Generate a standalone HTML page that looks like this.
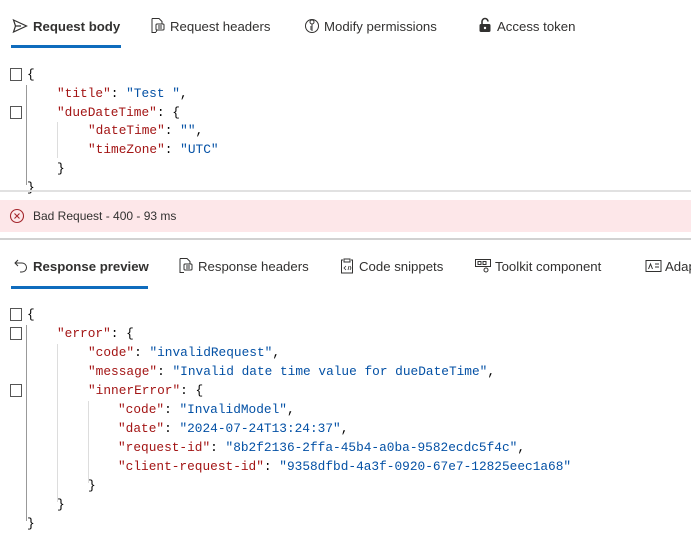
<!DOCTYPE html>
<html><head><meta charset="utf-8"><style>
html,body{margin:0;width:691px;height:546px;overflow:hidden}
body{background:#fff;font-family:"Liberation Sans",sans-serif;color:#323130;position:relative}
.a{position:absolute;white-space:nowrap}
.t{font-size:13.2px;line-height:16px}
.b{font-weight:bold}
.c{font-family:"Liberation Mono",monospace;font-size:12.8px;line-height:19px;color:#000}
.k{color:#a31515}.s{color:#0451a5}
.cb{position:absolute;width:10px;height:11px;border:1px solid #555;background:#fff}
.g{position:absolute;width:1px;background:#999}
.g2{position:absolute;width:1px;background:#ddd}
svg{position:absolute}
</style></head><body>
<svg style="left:12px;top:18px" width="16" height="16" viewBox="0 0 16 16"><path d="M1.5 2 L14.5 8 L1.5 14 L3.5 8 Z M3.5 8 H9" fill="none" stroke="#323130" stroke-width="1.2"/></svg>
<div class="a t b" style="left:33px;top:19px">Request body</div>
<div class="a" style="left:11px;top:45px;width:110px;height:3px;background:#0f6cbd"></div>
<svg style="left:150px;top:17px" width="16" height="17" viewBox="0 0 16 17"><path d="M2 1.5h7l3 3v3M2 1.5v14h4" fill="none" stroke="#323130"/><rect x="6" y="7" width="8" height="6" rx="1" fill="none" stroke="#323130"/><path d="M8 9h4M8 11h4M7 13l-1 2" stroke="#323130" fill="none"/></svg>
<div class="a t" style="left:170px;top:19px">Request headers</div>
<svg style="left:304px;top:17px" width="16" height="17" viewBox="0 0 16 17"><circle cx="8" cy="9" r="6.5" fill="none" stroke="#323130"/><circle cx="8" cy="5" r="2" fill="none" stroke="#323130"/><path d="M8 7v7M8 10h-2M8 12h-2" stroke="#323130" fill="none"/></svg>
<div class="a t" style="left:324px;top:19px">Modify permissions</div>
<svg style="left:478px;top:17px" width="14" height="17" viewBox="0 0 14 17"><path d="M4 7V4.5a3 3 0 0 1 6 0" fill="none" stroke="#323130" stroke-width="1.6"/><rect x="1.5" y="7" width="11" height="8" rx="1.5" fill="#323130"/><circle cx="7" cy="11" r="1.2" fill="#fff"/></svg>
<div class="a t" style="left:497px;top:19px">Access token</div>
<div class="cb" style="left:10px;top:68px"></div>
<div class="cb" style="left:10px;top:106px"></div>
<div class="g" style="left:26px;top:85px;height:100px"></div>
<div class="g2" style="left:57px;top:122px;height:36px"></div>
<div class="a c" style="left:27px;top:65px">{</div>
<div class="a c" style="left:57px;top:84px"><span class="k">"title"</span>: <span class="s">"Test "</span>,</div>
<div class="a c" style="left:57px;top:103px"><span class="k">"dueDateTime"</span>: {</div>
<div class="a c" style="left:88px;top:121px"><span class="k">"dateTime"</span>: <span class="s">""</span>,</div>
<div class="a c" style="left:88px;top:140px"><span class="k">"timeZone"</span>: <span class="s">"UTC"</span></div>
<div class="a c" style="left:57px;top:159px">}</div>
<div class="a c" style="left:27px;top:178px">}</div>
<div class="a" style="left:0;top:190px;width:691px;height:2px;background:#e1e1e1"></div>
<div class="a" style="left:0;top:200px;width:691px;height:32px;background:#fde7e9"></div>
<svg style="left:9px;top:208px" width="16" height="16" viewBox="0 0 16 16"><circle cx="8" cy="8" r="6.5" fill="none" stroke="#a4262c" stroke-width="1.1"/><path d="M5.5 5.5l5 5M10.5 5.5l-5 5" stroke="#a4262c" stroke-width="1.1"/></svg>
<div class="a" style="left:33px;top:209px;font-size:12px;color:#323130">Bad Request - 400 - 93 ms</div>
<div class="a" style="left:0;top:238px;width:691px;height:2px;background:#d1d1d1"></div>
<svg style="left:13px;top:258px" width="16" height="16" viewBox="0 0 16 16"><path d="M5 2L2 5l3 3M2 5h7a4.5 4.5 0 0 1 0 9H7" fill="none" stroke="#323130"/></svg>
<div class="a t b" style="left:33px;top:259px">Response preview</div>
<div class="a" style="left:11px;top:286px;width:137px;height:3px;background:#0f6cbd"></div>
<svg style="left:178px;top:257px" width="16" height="17" viewBox="0 0 16 17"><path d="M2 1.5h7l3 3v3M2 1.5v14h4" fill="none" stroke="#323130"/><rect x="6" y="7" width="8" height="6" rx="1" fill="none" stroke="#323130"/><path d="M8 9h4M8 11h4" stroke="#323130"/></svg>
<div class="a t" style="left:198px;top:259px">Response headers</div>
<svg style="left:339px;top:257px" width="16" height="17" viewBox="0 0 16 17"><path d="M4 3H2.5v13h11V3H12M5 2h6v3H5z" fill="none" stroke="#323130"/><path d="M7 9l-2 2 2 2M9 13l1-4M11 9l1 2-1 2" fill="none" stroke="#323130" stroke-width=".8"/></svg>
<div class="a t" style="left:359px;top:259px">Code snippets</div>
<svg style="left:474px;top:258px" width="18" height="16" viewBox="0 0 18 16"><rect x="1.5" y="1.5" width="15" height="7" fill="none" stroke="#323130"/><rect x="4" y="3.5" width="3" height="3" fill="none" stroke="#323130"/><rect x="9" y="3.5" width="3" height="3" fill="none" stroke="#323130"/><circle cx="12" cy="12" r="2" fill="none" stroke="#323130"/></svg>
<div class="a t" style="left:495px;top:259px">Toolkit component</div>
<svg style="left:645px;top:259px" width="17" height="14" viewBox="0 0 17 14"><rect x="1" y="1.5" width="15" height="11" fill="none" stroke="#323130"/><path d="M3.5 10l2-5 2 5M10 5h4M10 8h4" fill="none" stroke="#323130"/></svg>
<div class="a t" style="left:665px;top:259px;width:26px;overflow:hidden">Adaptive</div>
<div class="cb" style="left:10px;top:308px"></div>
<div class="cb" style="left:10px;top:327px"></div>
<div class="cb" style="left:10px;top:384px"></div>
<div class="g" style="left:26px;top:325px;height:196px"></div>
<div class="g2" style="left:57px;top:344px;height:158px"></div>
<div class="g2" style="left:88px;top:401px;height:82px"></div>
<div class="a c" style="left:27px;top:305px">{</div>
<div class="a c" style="left:57px;top:324px"><span class="k">"error"</span>: {</div>
<div class="a c" style="left:88px;top:343px"><span class="k">"code"</span>: <span class="s">"invalidRequest"</span>,</div>
<div class="a c" style="left:88px;top:362px"><span class="k">"message"</span>: <span class="s">"Invalid date time value for dueDateTime"</span>,</div>
<div class="a c" style="left:88px;top:381px"><span class="k">"innerError"</span>: {</div>
<div class="a c" style="left:118px;top:400px"><span class="k">"code"</span>: <span class="s">"InvalidModel"</span>,</div>
<div class="a c" style="left:118px;top:419px"><span class="k">"date"</span>: <span class="s">"2024-07-24T13:24:37"</span>,</div>
<div class="a c" style="left:118px;top:438px"><span class="k">"request-id"</span>: <span class="s">"8b2f2136-2ffa-45b4-a0ba-9582ecdc5f4c"</span>,</div>
<div class="a c" style="left:118px;top:457px"><span class="k">"client-request-id"</span>: <span class="s">"9358dfbd-4a3f-0920-67e7-12825eec1a68"</span></div>
<div class="a c" style="left:88px;top:476px">}</div>
<div class="a c" style="left:57px;top:495px">}</div>
<div class="a c" style="left:27px;top:514px">}</div>
</body></html>
